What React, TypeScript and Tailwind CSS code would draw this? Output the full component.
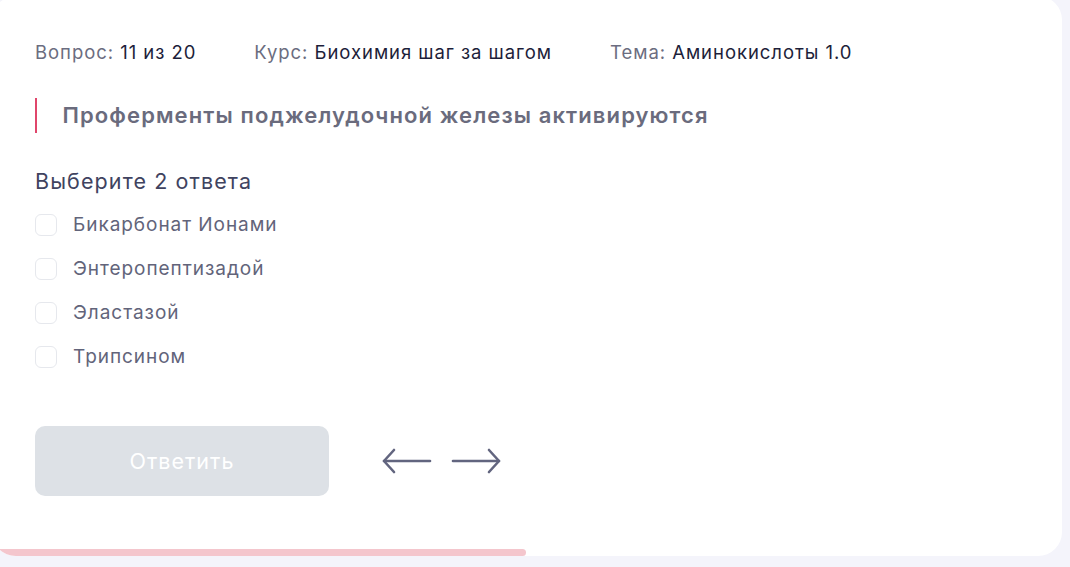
import { useState } from "react";

const options = ["Бикарбонат Ионами", "Энтеропептизадой", "Эластазой", "Трипсином"];

function Arrow({ dir }: { dir: "left" | "right" }) {
  return (
    <svg width="50" height="26" viewBox="0 0 50 26" fill="none" stroke="#62657f" strokeWidth="2.6" strokeLinecap="round" strokeLinejoin="round">
      {dir === "left" ? (
        <>
          <path d="M2 13h46" />
          <path d="M12 2 2 13l10 11" />
        </>
      ) : (
        <>
          <path d="M2 13h46" />
          <path d="M38 2l10 11-10 11" />
        </>
      )}
    </svg>
  );
}

export default function App() {
  const [checked, setChecked] = useState<string[]>([]);

  const toggle = (o: string) =>
    setChecked((prev) => (prev.includes(o) ? prev.filter((x) => x !== o) : [...prev, o]));

  return (
    <div className="h-[567px] w-[1070px] overflow-hidden bg-[#f4f4fb] font-['Inter',sans-serif]">
      <div className="ml-[-8px] mt-[-4px] w-[1070px] overflow-hidden rounded-[24px] bg-white">
        <div className="pl-[43px] pt-[44px]">
          {/* meta line */}
          <div className="flex gap-[58px] text-[18.5px] leading-[24px] tracking-[0.95px]">
            <p className="text-[#6b6d80]">
              Вопрос: <span className="text-[#1d1e3a]">11 из 20</span>
            </p>
            <p className="text-[#6b6d80]">
              Курс: <span className="text-[#1d1e3a]">Биохимия шаг за шагом</span>
            </p>
            <p className="text-[#6b6d80]">
              Тема: <span className="text-[#1d1e3a]">Аминокислоты 1.0</span>
            </p>
          </div>

          <div className="mt-[34px] border-l-[2.5px] border-[#e0466b] pl-[25.5px] text-[22px] font-semibold leading-[35px] tracking-[1.1px] text-[#6a6b7d]">
            Проферменты поджелудочной железы активируются
          </div>

          <p className="mt-[34px] text-[21.5px] leading-[28px] tracking-[1.1px] text-[#40435f]">Выберите 2 ответа</p>

          <ul className="mt-[8px] flex flex-col">
            {options.map((o) => (
              <li key={o} className="h-11">
                <label className="flex h-full cursor-pointer select-none items-center gap-4">
                  <input
                    type="checkbox"
                    checked={checked.includes(o)}
                    onChange={() => toggle(o)}
                    className="size-[22px] appearance-none rounded-[6px] border border-[#e6e8ed] bg-white"
                  />
                  <span className="text-[19px] tracking-[0.95px] text-[#62647a]">{o}</span>
                </label>
              </li>
            ))}
          </ul>

          <div className="mt-[47px] flex items-center gap-[53px]">
            <button className="h-[70px] w-[294px] rounded-[10px] bg-[#dde1e6] text-[21.5px] tracking-[1px] text-white">
              Ответить
            </button>
            <div className="flex items-center gap-[19px]">
              <Arrow dir="left" />
              <Arrow dir="right" />
            </div>
          </div>
        </div>

        {/* progress */}
        <div className="mt-[53px] h-[7px] w-[534px] rounded-r-full bg-[#f4c6cd]" />
      </div>
    </div>
  );
}
